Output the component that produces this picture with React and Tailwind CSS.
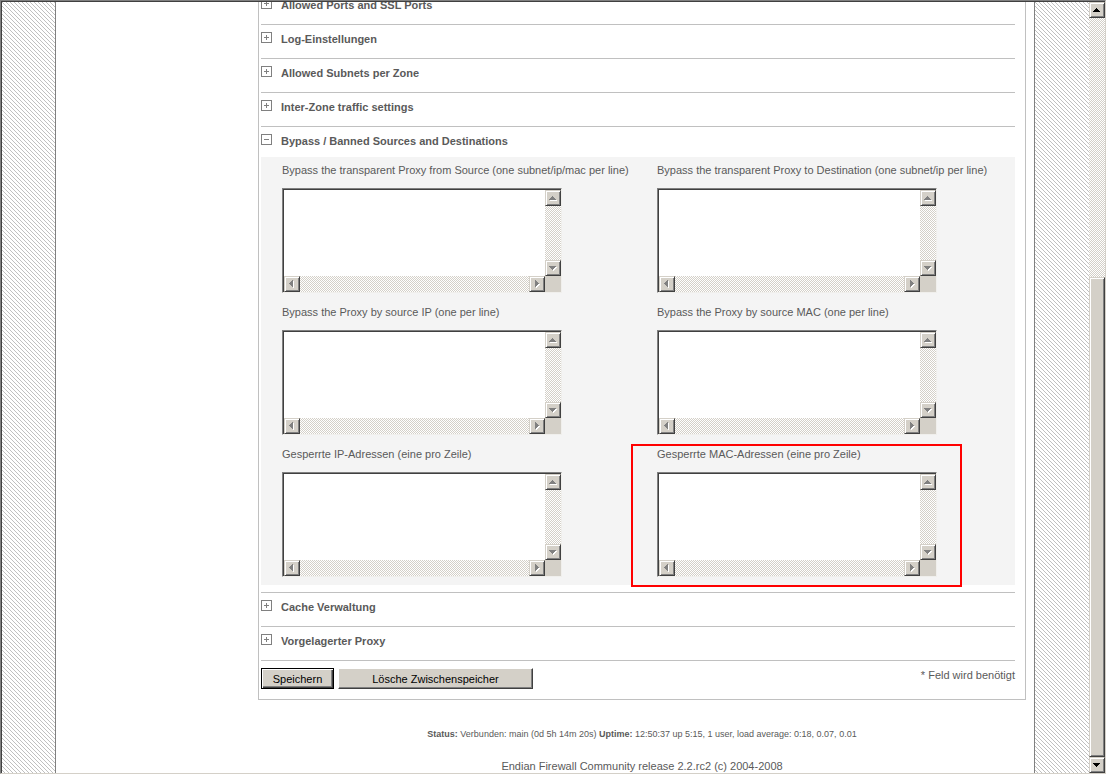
import { useState } from "react";

const topSections = [
  "Allowed Ports and SSL Ports",
  "Log-Einstellungen",
  "Allowed Subnets per Zone",
  "Inter-Zone traffic settings",
];

const bottomSections = ["Cache Verwaltung", "Vorgelagerter Proxy"];

const fields = [
  {
    id: "bypass-source",
    label: "Bypass the transparent Proxy from Source (one subnet/ip/mac per line)",
  },
  {
    id: "bypass-destination",
    label: "Bypass the transparent Proxy to Destination (one subnet/ip per line)",
  },
  { id: "bypass-ip", label: "Bypass the Proxy by source IP (one per line)" },
  { id: "bypass-mac", label: "Bypass the Proxy by source MAC (one per line)" },
  { id: "banned-ip", label: "Gesperrte IP-Adressen (eine pro Zeile)" },
  {
    id: "banned-mac",
    label: "Gesperrte MAC-Adressen (eine pro Zeile)",
    marked: true,
  },
];

const checker =
  "bg-[repeating-conic-gradient(#ffffff_0_25%,#d4d0c8_0_50%)] bg-size-[2px_2px]";

const arrows = {
  up: "M3 9h7v-1h-1v-1h-1v-1h-1v-1h-1v1h-1v1h-1v1h-1z",
  down: "M3 5h7v1h-1v1h-1v1h-1v1h-1v-1h-1v-1h-1v-1h-1z",
  left: "M8 3v7h-1v-1h-1v-1h-1v-1h-1v-1h1v-1h1v-1h1v-1z",
  right: "M5 3v7h1v-1h1v-1h1v-1h1v-1h-1v-1h-1v-1h-1v-1z",
};

function ArrowButton({ dir, disabled }) {
  return (
    <button
      type="button"
      aria-label={dir}
      disabled={disabled}
      className="block w-4 h-4 shrink-0 bg-[#d4d0c8] border border-t-[#d4d0c8] border-l-[#d4d0c8] border-r-[#404040] border-b-[#404040] shadow-[inset_1px_1px_0_#ffffff,inset_-1px_-1px_0_#808080]"
    >
      <svg
        width="14"
        height="14"
        viewBox="0 0 14 14"
        shapeRendering="crispEdges"
      >
        {disabled && (
          <path d={arrows[dir]} fill="#ffffff" transform="translate(1 1)" />
        )}
        <path d={arrows[dir]} fill={disabled ? "#808080" : "#000000"} />
      </svg>
    </button>
  );
}

function Hatch({ className }) {
  return (
    <div
      className={`${className} [background-image:conic-gradient(at_1px_1px,transparent_75%,#c0c0c0_0),conic-gradient(at_1px_1px,transparent_75%,#c0c0c0_0),conic-gradient(at_1px_1px,transparent_75%,#c0c0c0_0),conic-gradient(at_1px_1px,transparent_75%,#c0c0c0_0)] [background-size:4px_4px] [background-position:0_0,1px_1px,2px_2px,3px_3px]`}
    />
  );
}

function SectionTitle({ title, open, onClick }) {
  return (
    <button
      type="button"
      aria-expanded={open}
      onClick={onClick}
      className="flex items-start gap-[9px] w-full text-left font-bold text-[11px] leading-[14px] text-[#5a5a5a]"
    >
      <svg
        width="11"
        height="11"
        viewBox="0 0 11 11"
        shapeRendering="crispEdges"
        className="shrink-0"
      >
        <rect x="0.5" y="0.5" width="10" height="10" fill="#fff" stroke="#808080" />
        <path d="M3 5.5h5" stroke="#808080" />
        {!open && <path d="M5.5 3v5" stroke="#808080" />}
      </svg>
      {title}
    </button>
  );
}

function Section({ title }) {
  return (
    <div className="h-[34px] pt-[7px] border-b border-[#c0c0c0]">
      <SectionTitle title={title} open={false} />
    </div>
  );
}

function ListField({ id, label, marked }) {
  return (
    <div className="relative">
      <label htmlFor={id} className="block text-[11px] leading-[14px] mb-[11px]">
        {label}
      </label>
      <div className="grid grid-cols-[1fr_16px] grid-rows-[86px_16px] w-[280px] pt-px pl-px bg-[#d4d0c8] border border-t-[#808080] border-l-[#808080] border-r-[#f0efec] border-b-[#f0efec] shadow-[inset_1px_1px_0_#404040]">
        <textarea
          id={id}
          className="block w-full h-full resize-none overflow-hidden bg-white outline-none p-px font-mono text-xs"
        />
        <div className={`flex flex-col justify-between ${checker}`}>
          <ArrowButton dir="up" disabled />
          <ArrowButton dir="down" disabled />
        </div>
        <div className={`flex justify-between ${checker}`}>
          <ArrowButton dir="left" disabled />
          <ArrowButton dir="right" disabled />
        </div>
      </div>
      {marked && (
        <div className="absolute -left-[26px] -top-[3px] w-[331px] h-[143px] border-2 border-[#ff0000] pointer-events-none" />
      )}
    </div>
  );
}

function Scrollbar() {
  return (
    <div className="flex flex-col w-4 shrink-0">
      <ArrowButton dir="up" />
      <div className={`flex-[260] ${checker}`} />
      <div className="flex-[479] bg-[#d4d0c8] border border-t-[#d4d0c8] border-l-[#d4d0c8] border-r-[#404040] border-b-[#404040] shadow-[inset_1px_1px_0_#ffffff,inset_-1px_-1px_0_#808080]" />
      <ArrowButton dir="down" />
    </div>
  );
}

function App() {
  const [open, setOpen] = useState(true);

  return (
    <div className="h-screen pb-px pr-px bg-white font-['Liberation_Sans',Arial,sans-serif] text-[#5a5a5a]">
      <div className="flex h-full pt-px pl-px overflow-hidden border border-t-[#808080] border-l-[#808080] border-r-[#d4d0c8] border-b-[#d4d0c8] shadow-[inset_1px_1px_0_#404040]">
        <div className="flex flex-1 overflow-hidden">
          <Hatch className="flex-[53]" />
          <div className="w-full max-w-[980px] border-x border-[#808080] bg-white pl-[202px] pr-2">
            <div className="-mt-3 border border-[#c0c0c0] pl-0.5 pr-[10px] pb-[10px]">
              {topSections.map((title) => (
                <Section key={title} title={title} />
              ))}
              <div className="pt-[7px] pb-[7px] border-b border-[#c0c0c0]">
                <SectionTitle
                  title="Bypass / Banned Sources and Destinations"
                  open={open}
                  onClick={() => setOpen(!open)}
                />
                {open && (
                  <div className="grid grid-cols-[375px_1fr] gap-y-3 mt-[9px] pt-[6px] pb-2 pl-[21px] bg-[#f4f4f4]">
                    {fields.map((field) => (
                      <ListField key={field.id} {...field} />
                    ))}
                  </div>
                )}
              </div>
              {bottomSections.map((title) => (
                <Section key={title} title={title} />
              ))}
              <div className="flex items-start gap-1 pt-[7px] text-[11px] leading-[14px]">
                <button
                  type="submit"
                  className="w-[73px] h-[21px] bg-[#d4d0c8] text-black border border-black shadow-[inset_1px_1px_0_#ffffff,inset_-1px_-1px_0_#404040,inset_-2px_-2px_0_#808080]"
                >
                  Speichern
                </button>
                <button
                  type="button"
                  className="w-[195px] h-[21px] bg-[#d4d0c8] text-black border border-t-white border-l-white border-r-[#404040] border-b-[#404040] shadow-[inset_-1px_-1px_0_#808080]"
                >
                  Lösche Zwischenspeicher
                </button>
                <p className="ml-auto">* Feld wird benötigt</p>
              </div>
            </div>
            <footer className="text-center">
              <p className="mt-7 text-[9px] leading-3">
                <b>Status:</b> Verbunden: main (0d 5h 14m 20s) <b>Uptime:</b>{" "}
                12:50:37 up 5:15, 1 user, load average: 0:18, 0.07, 0.01
              </p>
              <p className="mt-[19px] text-[11px] leading-[14px]">
                Endian Firewall Community release 2.2.rc2 (c) 2004-2008
              </p>
            </footer>
          </div>
          <Hatch className="flex-[54]" />
        </div>
        <Scrollbar />
      </div>
    </div>
  );
}

export default App;
